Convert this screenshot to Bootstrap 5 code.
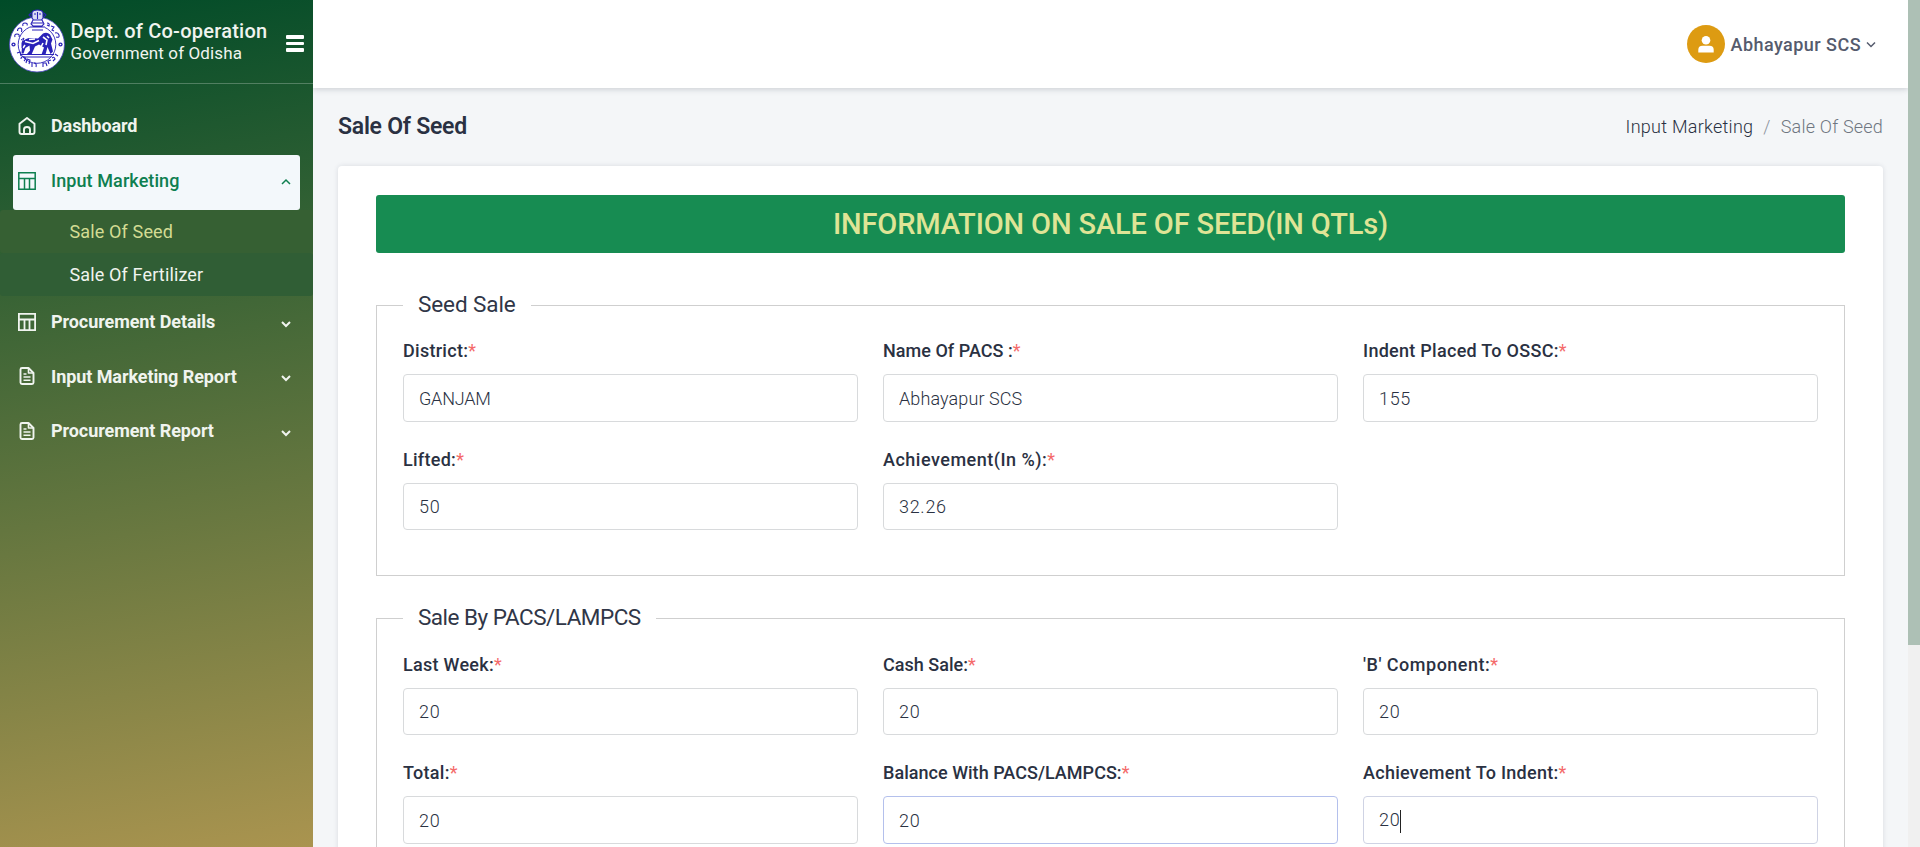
<!DOCTYPE html>
<html lang="en">
<head>
<meta charset="utf-8">
<meta name="viewport" content="width=device-width, initial-scale=1">
<title>Sale Of Seed</title>
<link href="https://cdn.jsdelivr.net/npm/bootstrap@5.3.0/dist/css/bootstrap.min.css" rel="stylesheet">
<style>
  body { font-family: Roboto, "Open Sans", sans-serif; font-size: 18px; color: #2a3142; background: #f4f6f8; height: 100vh; overflow: hidden; }
  .sidebar { width: 313px; background: linear-gradient(170deg, #004b28, #aa944f); color: #f0f4ef; }
  .brand { height: 84px; padding: 7px 9px 0 8.5px; border-bottom: 1px solid rgba(255,255,255,.25); }
  .brand-text { margin-left: 6px; padding-top: 12px; width: 211.5px; white-space: nowrap; }
  .brand-title { font-size: 20px; font-weight: 500; line-height: 24px; letter-spacing: .24px; }
  .brand-sub { font-size: 17px; line-height: 21px; letter-spacing: .12px; }
  .menu-toggle { margin-top: 28px; margin-left: 4px; gap: 3px; width: 18px; }
  .menu-toggle i { height: 3.6px; background: #fff; border-radius: 1px; }
  .side-menu { padding-top: 16px; }
  .side-menu .menu-link { height: 54.5px; margin: 0 13px; padding: 0 8px 3px 5px; color: #f0f4ef; font-weight: 700; letter-spacing: -.08px; text-decoration: none; border-radius: 3px; }
  .menu-link svg.ico { width: 18px; height: 18px; margin-right: 15px; flex: none; }
  .menu-link svg.chev { width: 12px; height: 12px; flex: none; margin-top: 2px; }
  .side-menu .menu-link.active { height: 55.5px; background: #f3f8fb; color: #0e7f50; font-weight: 500; letter-spacing: .09px; }
  .submenu a { display: block; height: 43px; line-height: 43px; padding-left: 69.5px; letter-spacing: .14px; text-decoration: none; color: #f0f4ef; background: #305e35; border-radius: 3px; }
  .submenu a.current { color: #d3dc94; background: #366033; }
  .topbar { height: 88px; background: #fff; box-shadow: 0 1px 6px rgba(40,50,70,.22); padding-right: 31px; flex: none; position: relative; }
  .avatar { width: 38px; height: 38px; background: #dd9b12; }
  .user-name { margin-left: 5px; color: #555b6d; font-weight: 500; letter-spacing: .46px; }
  .scroll-track { width: 12px; background: #f0f0f0; flex: none; }
  .scroll-thumb { height: 645px; background: #adc0b5; }
  .page-body { padding: 0 25px; }
  .page-head { height: 78px; }
  .page-title { font-size: 23px; font-weight: 600; letter-spacing: -.25px; line-height: 28px; margin: 0; }
  .crumbs { font-weight: 300; font-size: 18px; margin: 0 0 1px; --bs-breadcrumb-item-padding-x: 10px; --bs-breadcrumb-divider-color: #8c929c; }
  .crumbs a { color: #2a3142; text-decoration: none; letter-spacing: .27px; }
  .crumbs .active { color: #6f7681; letter-spacing: .2px; }
  .form-card { border: 0; border-radius: 4px; box-shadow: 0 0 5px rgba(40,50,70,.13); height: 900px; padding: 29px 38px 0; }
  .banner { height: 58px; line-height: 58px; background: #178c52; color: #dfe496; font-size: 29px; font-weight: 500; letter-spacing: -.13px; border-radius: 3px; margin-bottom: 39px; }
  .group-box { border: 1px solid #cfcfcf; padding: 0 26px; height: 284.4px; margin-bottom: 29px; }
  .group-box legend { float: none; width: auto; margin: 0; padding: 0 15px 2px; font-size: 22.5px; line-height: 25px; letter-spacing: -.1px; color: #303647; }
  .group-box .legend-tight { letter-spacing: -.5px; }
  .group-box .row { --bs-gutter-x: 25px; padding-top: 20.3px; }
  .field { height: 108.6px; }
  .field .form-label { display: block; line-height: 23px; font-weight: 500; margin: 0 0 12px; letter-spacing: .28px; }
  .field .form-label i { font-style: normal; font-weight: 400; color: #f46a6a; letter-spacing: 0; }
  .field .snug { letter-spacing: .03px; }
  .field .loose { letter-spacing: .5px; }
  .field .form-control { height: 47.6px; padding: 0 15px; border: 1px solid #d8dadc; border-radius: 4px; font-size: 18px; font-weight: 300; color: #2a3142; letter-spacing: .1px; background: #fff; }
  .field .num { letter-spacing: .7px; }
  .field .caps { letter-spacing: -.2px; }
  .field .was-focused { border-color: #b4c0ec; }
  .field .focused { border-color: #cfd3e4; line-height: 46px; }
  .caret { width: 1px; height: 23px; background: #222; vertical-align: middle; }
</style>
</head>
<body class="d-flex">

<aside class="sidebar h-100 flex-shrink-0">
  <div class="brand d-flex align-items-start">
    <svg width="56" height="66" viewBox="0 0 56 66" class="flex-shrink-0">
      <circle cx="28" cy="37.500" r="27.500" fill="#fff" stroke="#4a44c4" stroke-width=".8"/>
      <circle cx="28" cy="37.500" r="18.800" fill="#fff" stroke="#2a22b8" stroke-width=".9"/>
      <circle cx="4.500" cy="37.500" r="2.100" fill="#2a22b8"/><circle cx="51.500" cy="37.500" r="2.100" fill="#2a22b8"/>
      <circle cx="4.500" cy="37.500" r=".8" fill="#fff"/><circle cx="51.500" cy="37.500" r=".8" fill="#fff"/>
      <g fill="none" stroke="#2a22b8" stroke-width="1.100">
        <path d="M6 30q-1-3 2-3t2 3M8.500 24q0-3 2.500-3t1.500 4M14 19q-1-3 2-3t2 2.500"/>
        <path d="M38 16q3 0 2 3l-2-1M42 19l3 1-2 3 2 1M46 26q3-1 4 2t-3 2"/>
        <path d="M8 46l3-1 1 4M12 52q0-3 3-2t0 4M17 56l1-4 3 1-1 4M23 56v4M25 56q3 0 2 4"/>
        <path d="M34 60v-4l3 0 1 3M40 57l-1-3 3-1M43 51q2-2 3 1l-2 2M46 47l3 2"/>
      </g>
      <path d="M21 24v-9l2-1h11l2 1v9l-3 2h-9z" fill="#fff"/>
      <g fill="none" stroke="#2a22b8" stroke-width="1.100">
        <path d="M23 5.500Q24 3 28.500 3T34 5.500V11l-1.500 2h-8L23 11z" fill="#dcdcf4"/>
        <path d="M25 7h2m3 0h2M28.500 5v7M24 13l-2 4 2 2h9l2-2-2-4M21 20h15M23 23h11M23 16h11"/>
        <path d="M22 10l-2-2 2-2M35 10l2-2-2-2"/>
      </g>
      <path d="M13 35.500q2-3.500 7-4.500l9 .500 5-5q4-2 7 1l2.500 5-1.500 4 2 8-2.500 2.500-3-7-2 7.500h-4l2.500-7-5-3-4 2-3.500 8h-5l3.500-4-.5-5-4 2.500-2 5.500h-2l.5-7.500z" fill="#2a22b8"/>
      <path d="M16 34.500l8 2 6-3M34 30l4 3-1 5M20 32.500l6-.5M31 42l3-6M16 38l-2 3M38 29l2 2" stroke="#fff" stroke-width="1.600" fill="none"/>
      <path d="M12 33l3-2-2 5v5M11 47.500h34M14 50h28" stroke="#2a22b8" fill="none"/>
    </svg>
    <div class="brand-text">
      <div class="brand-title">Dept. of Co-operation</div>
      <div class="brand-sub">Government of Odisha</div>
    </div>
    <div class="menu-toggle d-flex flex-column"><i></i><i></i><i></i></div>
  </div>

  <nav class="side-menu">
    <a class="menu-link d-flex align-items-center" href="#">
      <svg class="ico" viewBox="0 0 18 18" fill="none" stroke="currentColor" stroke-width="1.900" stroke-linejoin="round"><path d="M1.500 6.700 9 1l7.500 5.700V15q0 2-2 2h-11q-2 0-2-2z"/><path d="M6 17v-4.500q0-2.500 3-2.500t3 2.500V17"/></svg>
      <span>Dashboard</span>
    </a>
    <a class="menu-link active d-flex align-items-center" href="#">
      <svg class="ico" viewBox="0 0 18 18" fill="none" stroke="currentColor" stroke-width="1.500"><path d="M.8.800h16.400v16.400H.8zM1 6.500h16M6.500 6.500V17M11.500 6.500V17"/></svg>
      <span>Input Marketing</span>
      <svg class="chev ms-auto" viewBox="0 0 12 12" fill="none" stroke="currentColor" stroke-width="1.500"><path d="M2 8l4-4 4 4"/></svg>
    </a>
    <div class="submenu">
      <a class="current" href="#">Sale Of Seed</a>
      <a href="#">Sale Of Fertilizer</a>
    </div>
    <a class="menu-link d-flex align-items-center" href="#">
      <svg class="ico" viewBox="0 0 18 18" fill="none" stroke="currentColor" stroke-width="1.800"><path d="M.9.900h16.200v16.200H.9zM1 6.500h16M6.500 6.500V17M11.500 6.500V17"/></svg>
      <span>Procurement Details</span>
      <svg class="chev ms-auto" viewBox="0 0 12 12" fill="none" stroke="currentColor" stroke-width="2"><path d="M2 5l4 4 4-4"/></svg>
    </a>
    <a class="menu-link d-flex align-items-center" href="#">
      <svg class="ico" viewBox="0 0 18 18" fill="none" stroke="currentColor" stroke-width="1.900" stroke-linejoin="round"><path d="M10.500 1H4Q2.500 1 2.500 2.500v13Q2.500 17 4 17h10q1.500 0 1.500-1.500V6z"/><path d="M10.500 1v5h5M5.500 7h3M5.500 10h7M5.500 13.300h7" stroke-width="1.600"/></svg>
      <span>Input Marketing Report</span>
      <svg class="chev ms-auto" viewBox="0 0 12 12" fill="none" stroke="currentColor" stroke-width="2"><path d="M2 5l4 4 4-4"/></svg>
    </a>
    <a class="menu-link d-flex align-items-center" href="#">
      <svg class="ico" viewBox="0 0 18 18" fill="none" stroke="currentColor" stroke-width="1.900" stroke-linejoin="round"><path d="M10.500 1H4Q2.500 1 2.500 2.500v13Q2.500 17 4 17h10q1.500 0 1.500-1.500V6z"/><path d="M10.500 1v5h5M5.500 7h3M5.500 10h7M5.500 13.300h7" stroke-width="1.600"/></svg>
      <span>Procurement Report</span>
      <svg class="chev ms-auto" viewBox="0 0 12 12" fill="none" stroke="currentColor" stroke-width="2"><path d="M2 5l4 4 4-4"/></svg>
    </a>
  </nav>
</aside>

<div class="flex-grow-1 d-flex flex-column h-100 overflow-hidden">
  <header class="topbar d-flex align-items-center justify-content-end">
    <span class="avatar rounded-circle d-flex align-items-center justify-content-center">
      <svg width="16" height="17" viewBox="0 0 16 17" fill="#fff"><circle cx="8" cy="4.300" r="4.300"/><path d="M.3 16.500v-2.700Q.3 9.700 4.500 9.700h7q4.200 0 4.200 4.100v2.700z"/></svg>
    </span>
    <span class="user-name">Abhayapur SCS</span>
    <svg class="ms-1" width="12" height="12" viewBox="0 0 12 12" fill="none" stroke="#555b6d" stroke-width="1.500"><path d="M2 4.500l4 4 4-4"/></svg>
  </header>

  <main class="page-body">
    <div class="page-head d-flex align-items-center justify-content-between">
      <h4 class="page-title">Sale Of Seed</h4>
      <ol class="breadcrumb crumbs">
        <li class="breadcrumb-item"><a href="#">Input Marketing</a></li>
        <li class="breadcrumb-item active">Sale Of Seed</li>
      </ol>
    </div>

    <div class="card form-card">
      <div class="banner text-center">INFORMATION ON SALE OF SEED(IN QTLs)</div>

      <fieldset class="group-box">
        <legend>Seed Sale</legend>
        <div class="row">
          <div class="col-4 field"><label class="form-label">District:<i>*</i></label><input class="form-control caps" value="GANJAM"></div>
          <div class="col-4 field"><label class="form-label snug">Name Of PACS :<i>*</i></label><input class="form-control" value="Abhayapur SCS"></div>
          <div class="col-4 field"><label class="form-label">Indent Placed To OSSC:<i>*</i></label><input class="form-control num" value="155"></div>
          <div class="col-4 field"><label class="form-label">Lifted:<i>*</i></label><input class="form-control num" value="50"></div>
          <div class="col-4 field"><label class="form-label loose">Achievement(In %):<i>*</i></label><input class="form-control num" value="32.26"></div>
        </div>
      </fieldset>

      <fieldset class="group-box">
        <legend class="legend-tight">Sale By PACS/LAMPCS</legend>
        <div class="row">
          <div class="col-4 field"><label class="form-label">Last Week:<i>*</i></label><input class="form-control num" value="20"></div>
          <div class="col-4 field"><label class="form-label snug">Cash Sale:<i>*</i></label><input class="form-control num" value="20"></div>
          <div class="col-4 field"><label class="form-label loose">'B' Component:<i>*</i></label><input class="form-control num" value="20"></div>
          <div class="col-4 field"><label class="form-label">Total:<i>*</i></label><input class="form-control num" value="20"></div>
          <div class="col-4 field"><label class="form-label snug">Balance With PACS/LAMPCS:<i>*</i></label><input class="form-control num was-focused" value="20"></div>
          <div class="col-4 field"><label class="form-label">Achievement To Indent:<i>*</i></label><div class="form-control num focused">20<span class="caret d-inline-block"></span></div></div>
        </div>
      </fieldset>
    </div>
  </main>
</div>

<div class="scroll-track h-100"><div class="scroll-thumb"></div></div>

<script src="https://cdn.jsdelivr.net/npm/bootstrap@5.3.0/dist/js/bootstrap.bundle.min.js"></script>
</body>
</html>
